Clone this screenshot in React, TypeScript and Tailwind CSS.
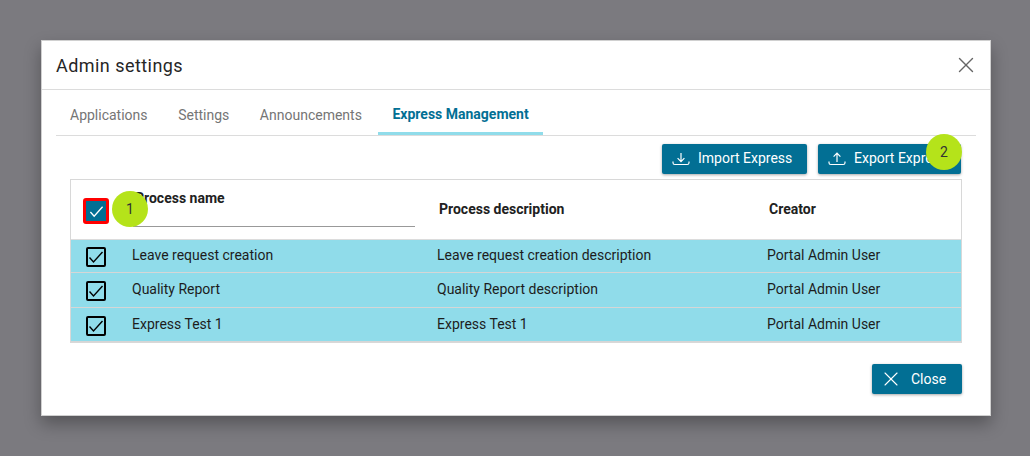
import { X } from 'lucide-react';

const rows = [
  { name: 'Leave request creation', description: 'Leave request creation description', creator: 'Portal Admin User', height: 'h-[33px]', pad: 'pb-[2px]' },
  { name: 'Quality Report', description: 'Quality Report description', creator: 'Portal Admin User', height: 'h-[35px]', pad: 'pb-[2px]' },
  { name: 'Express Test 1', description: 'Express Test 1', creator: 'Portal Admin User', height: 'h-[34px]', pad: 'pb-0' },
];

const tabs = ['Applications', 'Settings', 'Announcements'];

const CheckMark = ({ className }: { className?: string }) => (
  <svg viewBox="0 0 16 16" className={className} fill="none" stroke="currentColor" strokeWidth="1.4">
    <path d="M1.5 8.5 5.5 13 14.5 3" />
  </svg>
);

const ImportIcon = () => (
  <svg width="18" height="14" viewBox="0 0 18 14" fill="none" stroke="white" strokeWidth="1.2">
    <path d="M1 9.5v1.2c0 1 .8 1.8 1.8 1.8h12.4c1 0 1.8-.8 1.8-1.8V9.5" />
    <path d="M9 1v8.5M5.6 6.2 9 9.6l3.4-3.4" />
  </svg>
);

const ExportIcon = () => (
  <svg width="18" height="14" viewBox="0 0 18 14" fill="none" stroke="white" strokeWidth="1.2">
    <path d="M1 9.5v1.2c0 1 .8 1.8 1.8 1.8h12.4c1 0 1.8-.8 1.8-1.8V9.5" />
    <path d="M9 10V1.2M5.6 4.6 9 1.2l3.4 3.4" />
  </svg>
);

const Badge = ({ n, className }: { n: number; className: string }) => (
  <div className={`absolute flex h-9 w-9 items-center justify-center rounded-full bg-[#b5e31a] text-sm text-[#333] ${className}`}>
    {n}
  </div>
);

export default function App() {
  return (
    <div className="flex h-[456px] w-[1030px] items-center justify-center overflow-hidden bg-[#7b7a7f] pl-[2px] font-['Roboto',sans-serif] text-[14px] text-[#212121]">
      <div className="flex h-[376px] w-[950px] flex-col border border-[#d0d0d0] bg-white shadow-[0_8px_16px_rgba(0,0,0,0.3)]">
        <div className="flex h-[49px] shrink-0 items-center justify-between border-b border-[#dcdcdc] pl-[14px] pr-[11px]">
          <h1 className="text-[18px] tracking-[0.45px] text-[#262626]">Admin settings</h1>
          <X size={26} strokeWidth={1.3} className="text-[#666]" />
        </div>

        <div className="mx-[14px] flex h-[46px] shrink-0 gap-[2.6px] border-b border-[#dcdcdc]">
          {tabs.map((t) => (
            <div key={t} className="flex items-center px-[14px] pt-[6px] text-[#757575]">
              {t}
            </div>
          ))}
          <div className="flex items-center border-b-[3px] border-[#90dcea] px-[14px] pt-[6px] font-bold text-[#026f94]">
            Express Management
          </div>
        </div>

        <div className="mr-[29px] mt-[8px] flex shrink-0 justify-end gap-[11px] text-white">
          <button className="flex h-[30px] w-[145px] items-center rounded-[2px] bg-[#026f94] pb-[1px] pl-[10px] shadow-[0_1px_3px_rgba(0,0,0,0.35)]">
            <ImportIcon />
            <span className="ml-[8px]">Import Express</span>
          </button>
          <button className="flex h-[30px] w-[143px] items-center rounded-[2px] bg-[#026f94] pb-[1px] pl-[10px] shadow-[0_1px_3px_rgba(0,0,0,0.35)]">
            <ExportIcon />
            <span className="ml-[8px]">Export Express</span>
          </button>
        </div>

        <div className="relative mx-[28px] mt-[5px] shrink-0 border border-[#d8d8d8]">
          <div className="flex h-[60px] items-center border-b border-[#dcdcdc] font-bold">
            <div className="w-[62px] shrink-0" />
            <div className="mb-[2px] h-[37px] w-[282px] shrink-0 border-b border-[#999] pl-[2px] leading-[16px]">
              Process name
            </div>
            <div className="ml-[24px] w-[330px] shrink-0">Process description</div>
            <div>Creator</div>
          </div>
          {rows.map((r) => (
            <div key={r.name} className={`flex items-center border-b border-[#d6d6d6] bg-[#90dcea] text-[#1d1d1d] last:border-b-0 ${r.height}`}>
              <div className="w-[61px] shrink-0 pl-[15px] pt-[2px]">
                <div className="flex h-[20px] w-[20px] items-center justify-center rounded-[2px] border-2 border-black text-black">
                  <CheckMark className="h-[16px] w-[16px] shrink-0" />
                </div>
              </div>
              <div className={`w-[305px] shrink-0 ${r.pad}`}>{r.name}</div>
              <div className={`w-[330px] shrink-0 ${r.pad}`}>{r.description}</div>
              <div className={r.pad}>{r.creator}</div>
            </div>
          ))}
          <div className="absolute left-[12px] top-[18px] flex h-[26px] w-[26px] items-center justify-center rounded-[3px] border-[3px] border-[#f00] bg-[#026f94] text-white">
            <CheckMark className="h-[15px] w-[15px]" />
          </div>
          <Badge n={1} className="left-[41px] top-[11px]" />
          <Badge n={2} className="left-[855px] top-[-46px]" />
        </div>

        <div className="mr-[28px] mt-[21px] flex shrink-0 justify-end">
          <button className="flex h-[30px] w-[90px] items-center rounded-[2px] bg-[#026f94] pl-[7px] text-white shadow-[0_1px_3px_rgba(0,0,0,0.35)]">
            <X size={24} strokeWidth={1.1} />
            <span className="ml-[8px]">Close</span>
          </button>
        </div>
      </div>
    </div>
  );
}
